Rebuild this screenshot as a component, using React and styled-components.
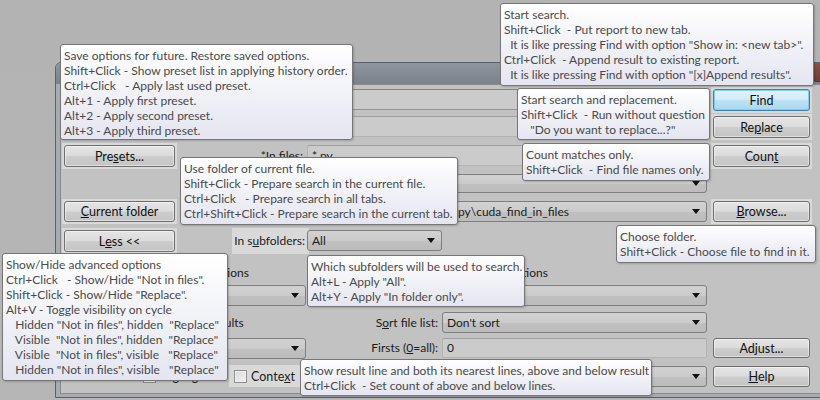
import React from 'react';
import styled, { createGlobalStyle } from 'styled-components';

const GlobalStyle = createGlobalStyle`
  body {
    margin: 0;
    background: #b4b4b4;
    font-family: Lato, "Open Sans", sans-serif;
  }
`;

const Desktop = styled.div`
  position: relative;
  width: 820px;
  height: 400px;
  overflow: hidden;
  background: linear-gradient(#b3b3b3, #b6b6b6);
`;

const Window = styled.div`
  margin: 62px 0 0 55px;
  width: 800px;
  height: 336px;
  box-sizing: border-box;
  border: 1px solid #5c6167;
  border-radius: 6px 6px 0 0;
  background: #a6acb2;
  display: flex;
  flex-direction: column;
  padding: 0 3px 3px 4px;
`;

const TitleBar = styled.div`
  height: 21px;
  margin: 0 -3px 0 -4px;
  border-radius: 5px 5px 0 0;
  background: linear-gradient(#8d959d, #7a828b);
  display: flex;
`;

const CloseBox = styled.div`
  margin-left: auto;
  width: 39px;
  height: 18px;
  border-radius: 0 0 4px 4px;
  background: linear-gradient(#86524c, #6e3f3a);
  border: 1px solid #4a3434;
  border-top: none;
`;

const Client = styled.div`
  flex: 1;
  background: #c2c2c2;
  border: 1px solid #8b8b8b;
  padding: 4px 0 0 3px;
  font: 12px/15px Lato, "Open Sans", sans-serif;
  color: #1c1c1c;
`;

const Form = styled.div`
  display: grid;
  grid-template-columns: 111px 132px 400px 103px;
  grid-template-rows: 27px 29px 29px 27px 29px 27px 28px 27px 26px 28px 22px;
  align-items: start;
`;

const Lit = styled.div`
  background: #d9d9d9;
  margin: -2px;
  padding: 2px;
  grid-column: ${p => p.$col || 'auto'};
  justify-self: ${p => p.$justify || 'stretch'};
`;

const Button = styled.div`
  box-sizing: border-box;
  width: ${p => (p.$w ? `${p.$w}px` : 'auto')};
  height: ${p => p.$h || 22}px;
  border: 1px solid ${p => (p.$focus ? '#3c7fb1' : '#6f6f6f')};
  border-radius: 3px;
  background: ${p =>
    p.$focus
      ? 'linear-gradient(#e3f3fb 0%, #d3ebf8 48%, #bde2f4 52%, #a7d8f0 100%)'
      : 'linear-gradient(#e4e4e4 0%, #dcdcdc 48%, #cdcdcd 52%, #c4c4c4 100%)'};
  box-shadow: inset 0 0 0 1px ${p => (p.$focus ? '#7ed0f2' : 'rgba(255,255,255,0.45)')};
  display: flex;
  align-items: center;
  justify-content: center;
  color: #111;
  font-size: 12.5px;
`;

const RightButton = styled(Button)`
  width: 97px;
  justify-self: end;
  grid-column: 4;
`;

const Label = styled.div`
  grid-column: ${p => p.$col || 2};
  justify-self: end;
  padding-right: ${p => p.$pr ?? 4}px;
  line-height: ${p => p.$h || 22}px;
  white-space: nowrap;
`;

const Edit = styled.div`
  box-sizing: border-box;
  grid-column: ${p => p.$col || 3};
  height: ${p => p.$h || 21}px;
  border: 1px solid ${p => (p.$focus ? '#6e9cc6' : '#b3b3b3')};
  border-top-color: ${p => (p.$focus ? '#5f8bb7' : '#a0a0a0')};
  border-radius: 2px;
  background: #cbcbcb;
  padding: 0 4px;
  line-height: ${p => (p.$h || 21) - 2}px;
  white-space: nowrap;
  overflow: hidden;
`;

const Combo = styled.div`
  box-sizing: border-box;
  grid-column: ${p => p.$col || 3};
  width: ${p => (p.$w ? `${p.$w}px` : 'auto')};
  flex: ${p => (p.$grow ? 1 : 'none')};
  height: ${p => p.$h || 21}px;
  margin-right: ${p => p.$mr || 0}px;
  border: 1px solid #7e7e7e;
  border-radius: 3px;
  background: linear-gradient(#d2d2d2 0%, #cbcbcb 50%, #c0c0c0 51%, #bcbcbc 100%);
  display: flex;
  align-items: center;
  padding: 0 6px 0 4px;
  white-space: nowrap;
  overflow: hidden;
  &::after {
    content: '';
    margin-left: auto;
    flex: none;
    border-left: 4px solid transparent;
    border-right: 4px solid transparent;
    border-top: 5px solid #111;
  }
`;

const ComboText = styled.span`
  overflow: hidden;
`;

const Header = styled.div`
  grid-column: ${p => p.$col};
  padding-top: ${p => p.$top || 8}px;
  padding-left: ${p => p.$indent || 0}px;
  white-space: nowrap;
`;

const Section = styled.div`
  grid-column: 3;
  display: grid;
  grid-template-columns: 135px 265px;
  align-items: center;
`;

const Check = styled.label`
  display: flex;
  align-items: center;
  gap: 4px;
  height: 22px;
  padding: 0 5px;
  margin-left: ${p => p.$ml || 0}px;
  margin-top: -1px;
  background: ${p => (p.$lit ? '#d9d9d9' : 'transparent')};
  width: max-content;
`;

const Box = styled.span`
  width: 11px;
  height: 11px;
  border: 1px solid #8e8f8f;
  background: linear-gradient(135deg, #d8d8d8, #f4f4f4);
  box-shadow: inset 0 0 0 1px #f0f0f0;
`;

const CheckText = styled.span`
  font-size: 12.5px;
`;

const LeftCell = styled.div`
  grid-column: ${p => p.$col || '1 / 3'};
  display: flex;
`;

const Tip = styled.div`
  position: absolute;
  left: ${p => p.$x}px;
  top: ${p => p.$y}px;
  width: ${p => p.$w}px;
  height: ${p => p.$h}px;
  box-sizing: border-box;
  border: 1px solid #767676;
  border-radius: 3px;
  background: linear-gradient(#ffffff, #e4e5f0);
  box-shadow: 1px 1px 2px rgba(0, 0, 0, 0.18);
  padding: 3px 3px 0 3px;
  font: 12px/15px Lato, "Open Sans", sans-serif;
  color: #4a4a4a;
  white-space: pre;
  overflow: hidden;
`;

const tips = [
  {
    x: 60, y: 44, w: 293, h: 96,
    text: 'Save options for future. Restore saved options.\nShift+Click - Show preset list in applying history order.\nCtrl+Click   - Apply last used preset.\nAlt+1 - Apply first preset.\nAlt+2 - Apply second preset.\nAlt+3 - Apply third preset.',
  },
  {
    x: 500, y: 3, w: 314, h: 83,
    text: 'Start search.\nShift+Click  - Put report to new tab.\n  It is like pressing Find with option "Show in: <new tab>".\nCtrl+Click  - Append result to existing report.\n  It is like pressing Find with option "[x]Append results".',
  },
  {
    x: 517, y: 88, w: 193, h: 52,
    text: 'Start search and replacement.\nShift+Click  - Run without question\n   "Do you want to replace...?"',
  },
  {
    x: 522, y: 143, w: 188, h: 38,
    text: 'Count matches only.\nShift+Click  - Find file names only.',
  },
  {
    x: 180, y: 157, w: 278, h: 68,
    text: 'Use folder of current file.\nShift+Click - Prepare search in the current file.\nCtrl+Click   - Prepare search in all tabs.\nCtrl+Shift+Click - Prepare search in the current tab.',
  },
  {
    x: 616, y: 225, w: 200, h: 38,
    text: 'Choose folder.\nShift+Click - Choose file to find in it.',
  },
  {
    x: 2, y: 253, w: 226, h: 128,
    text: 'Show/Hide advanced options\nCtrl+Click   - Show/Hide "Not in files".\nShift+Click - Show/Hide "Replace".\nAlt+V - Toggle visibility on cycle\n   Hidden "Not in files", hidden  "Replace"\n   Visible  "Not in files", hidden  "Replace"\n   Visible  "Not in files", visible   "Replace"\n   Hidden "Not in files", visible   "Replace"',
  },
  {
    x: 307, y: 255, w: 218, h: 52,
    text: 'Which subfolders will be used to search.\nAlt+L - Apply "All".\nAlt+Y - Apply "In folder only".',
  },
  {
    x: 300, y: 359, w: 352, h: 37,
    text: 'Show result line and both its nearest lines, above and below result\nCtrl+Click  - Set count of above and below lines.',
  },
];

export default function App() {
  return (
    <Desktop>
      <GlobalStyle />
      <Window>
        <TitleBar>
          <CloseBox />
        </TitleBar>
        <Client>
          <Form>
            {/* find what */}
            <Label>Find what:</Label>
            <Edit $focus />
            <Lit $col={4} $justify="end">
              <Button $focus $w={97}>Find</Button>
            </Lit>

            {/* replace with */}
            <Label>Replace with:</Label>
            <Edit />
            <Lit $col={4} $justify="end">
              <Button $w={97}>Re<u>p</u>lace</Button>
            </Lit>

            {/* in files */}
            <Lit $col={1}>
              <Button>Pre<u>s</u>ets...</Button>
            </Lit>
            <Label>*In files:</Label>
            <Edit>*.py</Edit>
            <Lit $col={4} $justify="end">
              <Button $w={97}>Coun<u>t</u></Button>
            </Lit>

            {/* not in files */}
            <Label $h={19}>Not in files:</Label>
            <Combo $h={19} />

            {/* in folder */}
            <Lit $col={1}>
              <Button $h={21}><u>C</u>urrent folder</Button>
            </Lit>
            <Label $h={21}>*In folder:</Label>
            <Combo>
              <ComboText>C:\Program Files\CudaText\py\cuda_find_in_files</ComboText>
            </Combo>
            <Lit $col={4} $justify="end">
              <Button $h={21} $w={97}><u>B</u>rowse...</Button>
            </Lit>

            {/* subfolders */}
            <Lit $col={1}>
              <Button>L<u>e</u>ss &lt;&lt;</Button>
            </Lit>
            <Lit $col={2} $justify="end">
              <Label as="span" $pr={2}>In s<u>u</u>bfolders:</Label>
            </Lit>
            <Combo $w={135}>
              <ComboText>All</ComboText>
            </Combo>

            {/* section headers */}
            <Header $col="1 / 3" $indent={107}>Search options</Header>
            <Header $col="3" $indent={160}>Output options</Header>

            <LeftCell $col="2">
              <Combo $grow $mr={1} />
            </LeftCell>
            <Section>
              <Label $col="1" $h={21}>Show in:</Label>
              <Combo $col="2" />
            </Section>

            <Header $col="1 / 3" $top={3} $indent={113}>Show results</Header>
            <Section>
              <Label $col="1" $h={21}>S<u>o</u>rt file list:</Label>
              <Combo $col="2">
                <ComboText>Don&apos;t sort</ComboText>
              </Combo>
            </Section>

            <LeftCell $col="2">
              <Combo $grow $mr={1} />
            </LeftCell>
            <Section>
              <Label $col="1" $h={20}>Firsts (<u>0</u>=all):</Label>
              <Edit $col="2" $h={20}>0</Edit>
            </Section>
            <RightButton $h={20}>Ad<u>j</u>ust...</RightButton>

            <LeftCell $col="1">
              <Check $ml={74}>
                <Box />
                <CheckText>Highlight</CheckText>
              </Check>
            </LeftCell>
            <LeftCell $col="2">
              <Check $lit $ml={54}>
                <Box />
                <CheckText>Conte<u>x</u>t</CheckText>
              </Check>
            </LeftCell>
            <Section>
              <Label $col="1" $h={21}>Context lines:</Label>
              <Combo $col="2">
                <ComboText>1</ComboText>
              </Combo>
            </Section>
            <RightButton $h={21}><u>H</u>elp</RightButton>
          </Form>
        </Client>
      </Window>
      {tips.map((t, i) => (
        <Tip key={i} $x={t.x} $y={t.y} $w={t.w} $h={t.h}>
          {t.text}
        </Tip>
      ))}
    </Desktop>
  );
}
